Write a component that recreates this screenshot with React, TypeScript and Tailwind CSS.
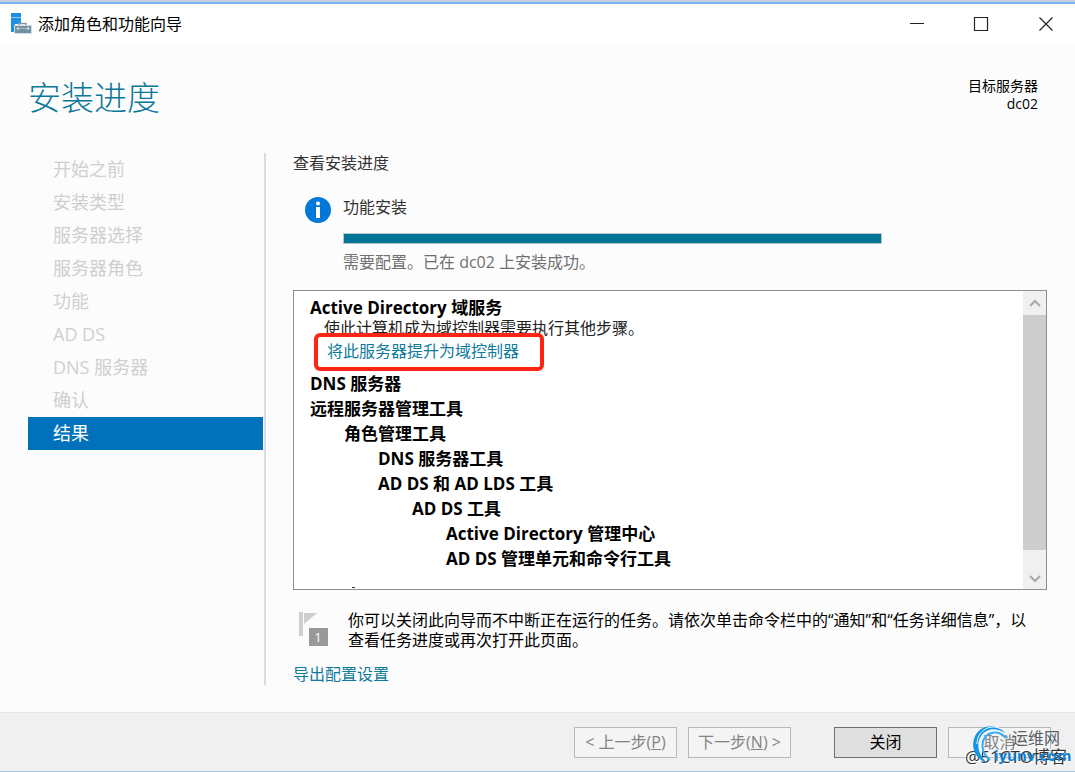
import type { ReactNode } from 'react'

const steps = [
  '开始之前',
  '安装类型',
  '服务器选择',
  '服务器角色',
  '功能',
  'AD DS',
  'DNS 服务器',
  '确认',
  '结果',
]

interface FeatureRow {
  label: string
  indent: string
}

const features: FeatureRow[] = [
  { label: 'DNS 服务器', indent: 'pl-0' },
  { label: '远程服务器管理工具', indent: 'pl-0' },
  { label: '角色管理工具', indent: 'pl-[34px]' },
  { label: 'DNS 服务器工具', indent: 'pl-[68px]' },
  { label: 'AD DS 和 AD LDS 工具', indent: 'pl-[68px]' },
  { label: 'AD DS 工具', indent: 'pl-[102px]' },
  { label: 'Active Directory 管理中心', indent: 'pl-[136px]' },
  { label: 'AD DS 管理单元和命令行工具', indent: 'pl-[136px]' },
]

function TitleBar() {
  return (
    <header className="flex h-10 items-center bg-white pl-[10px]">
      <svg className="h-[22px] w-[22px] shrink-0" viewBox="0 0 22 22">
        <path d="M1 0h10v11H5v8H1z" fill="#1f8fe0" />
        <path d="M1 4.5h10" stroke="#8cc8f2" />
        <path d="M9 12.5v-2h7v2" fill="none" stroke="#8399a8" strokeWidth="1.5" />
        <path d="M4.5 12.5h17v8h-17z" fill="#7391a5" stroke="#d5dee4" />
        <path d="M6 15.5h14" stroke="#a9bcc8" />
        <path d="M8 14v3M18 14v3" stroke="#e8eef2" />
      </svg>
      <h1 className="ml-[6px] text-[16px] leading-6 text-black">添加角色和功能向导</h1>
      <div className="ml-auto flex h-full">
        <button aria-label="最小化" className="flex w-16 items-center justify-center">
          <svg className="h-4 w-4" viewBox="0 0 16 16" fill="none" stroke="#222" strokeWidth="1">
            <path d="M1 7.5h14" />
          </svg>
        </button>
        <button aria-label="最大化" className="flex w-16 items-center justify-center">
          <svg className="h-4 w-4" viewBox="0 0 16 16" fill="none" stroke="#222" strokeWidth="1.2">
            <path d="M1.5 1.5h13v13h-13z" />
          </svg>
        </button>
        <button aria-label="关闭窗口" className="flex w-[62px] items-center justify-center pl-1">
          <svg className="h-4 w-4" viewBox="0 0 16 16" fill="none" stroke="#222" strokeWidth="1.2">
            <path d="M1.5 1.5l13 13M14.5 1.5l-13 13" />
          </svg>
        </button>
      </div>
    </header>
  )
}

function StepList() {
  return (
    <nav className="w-[238px] shrink-0 border-r-2 border-[#dcdcdc] pr-[1px]">
      <ul>
        {steps.map((step, i) => (
          <li
            key={step}
            className={
              i === steps.length - 1
                ? 'h-[33px] bg-[#0072bc] pl-[25px] text-[18px] leading-[33px] text-white'
                : 'h-[33px] pl-[25px] text-[18px] leading-[33px] text-[#cfcfcf]'
            }
          >
            {step}
          </li>
        ))}
      </ul>
    </nav>
  )
}

function ScrollBar() {
  return (
    <div className="flex w-[23px] shrink-0 flex-col bg-[#f0f0f0]">
      <button aria-label="向上滚动" className="flex h-6 items-center justify-center">
        <svg className="h-3 w-3" viewBox="0 0 12 12" fill="none" stroke="#a8a8a8" strokeWidth="2">
          <path d="M1 9l5-5 5 5" />
        </svg>
      </button>
      <div className="grow bg-[#cdcdcd]" />
      <button aria-label="向下滚动" className="flex h-[39px] items-end justify-center pb-1">
        <svg className="h-3 w-3" viewBox="0 0 12 12" fill="none" stroke="#a8a8a8" strokeWidth="2">
          <path d="M1 3l5 5 5-5" />
        </svg>
      </button>
    </div>
  )
}

function ResultBox() {
  return (
    <section className="mt-[18px] flex h-[300px] border border-[#8a8f99] bg-white">
      <div className="flex min-w-0 grow flex-col overflow-hidden pt-1 pl-4 text-[16px] text-black">
        <h3 className="h-[25px] text-[17px] leading-[25px] font-bold">Active Directory 域服务</h3>
        <p className="h-[17px] pl-[14px] leading-[17px] whitespace-nowrap text-[#222]">
          使此计算机成为域控制器需要执行其他步骤。
        </p>
        <div className="flex h-[34px] items-start pt-[2px] pl-[17px]">
          <a href="#promote" className="relative leading-6 text-[#0e7a9c]">
            将此服务器提升为域控制器
            <span className="absolute -top-[6px] -right-[25px] -bottom-[8px] -left-[13px] rounded-md border-4 border-[#ff2414]" />
          </a>
        </div>
        <ul className="text-[17px] font-bold">
          {features.map((f) => (
            <li key={f.label} className={f.indent + ' h-[25px] leading-[25px] whitespace-nowrap'}>
              {f.label}
            </li>
          ))}
        </ul>
        <div className="mt-auto mb-[1px] ml-[42px] h-[1px] w-[3px] shrink-0 bg-[#333]" />
      </div>
      <ScrollBar />
    </section>
  )
}

function WizardButton({ children, disabled }: { children: ReactNode; disabled?: boolean }) {
  return (
    <button
      disabled={disabled}
      className={
        disabled
          ? 'h-[31px] w-[103px] border border-[#b4babd] bg-[#f4f4f4] text-[16px] text-[#838383]'
          : 'h-[31px] w-[103px] border border-[#707070] bg-[#dfdfdf] text-[16px] text-black'
      }
    >
      {children}
    </button>
  )
}

function Watermark() {
  return (
    <div className="pointer-events-none absolute right-1 bottom-0 h-[50px] w-[106px]">
      <span className="absolute bottom-1 left-0 text-[17px] leading-5 whitespace-nowrap text-[#333] [text-shadow:1px_1px_0_#fff,-1px_-1px_0_#fff]">
        @51CTO博客
      </span>
      <svg className="absolute top-[3px] left-1 h-[42px] w-[42px]" viewBox="0 0 42 42" fill="none">
        <path d="M36 9C27-2 9 1 5 15c-3 10 2 20 13 24C9 30 7 20 12 12 17 4 28 3 36 9z" fill="#1296e8" />
        <path d="M37 14C29 5 17 8 14 17c-2 8 1 14 7 19" stroke="#35aef2" strokeWidth="2" />
        <path d="M32 5C21-1 8 7 8 20" stroke="#fff" strokeWidth="1" />
      </svg>
      <span className="absolute top-[7px] left-[47px] text-[16px] leading-5 whitespace-nowrap text-[#555d66]">
        运维网
      </span>
      <span className="absolute bottom-[6px] left-[29px] text-[15px] leading-5 font-bold whitespace-nowrap text-[#1382d4]">
        iyunv.com
      </span>
    </div>
  )
}

export default function App() {
  return (
    <div className="flex min-h-screen flex-col border-t-2 border-b border-t-[#c3cfe2] border-b-[#a9c3da] bg-[#fcfcfc] font-['Open_Sans','Noto_Sans_CJK_SC',sans-serif]">
      <div className="h-[2px] bg-[#7ab6ee]" />
      <TitleBar />

      <div className="flex items-start justify-between pr-[37px] pl-7">
        <h2 className="pt-[29px] text-[33px] leading-[50px] font-light text-[#0b7799]">安装进度</h2>
        <div className="pt-[33px] text-right text-[14px] leading-[18px] text-black">
          <p>目标服务器</p>
          <p>dc02</p>
        </div>
      </div>

      <div className="mt-[30px] flex grow pr-7 pb-[27px] pl-7">
        <StepList />
        <main className="ml-[27px] min-w-0 grow text-[16px] leading-5">
          <h3 className="text-[#333]">查看安装进度</h3>
          <div className="mt-6 flex">
            <svg className="ml-3 h-[26px] w-[26px] shrink-0" viewBox="0 0 26 26">
              <circle cx="13" cy="13" r="13" fill="#0078d7" />
              <circle cx="13" cy="6.5" r="2" fill="#fff" />
              <path d="M11 10h4v11h-4z" fill="#fff" />
            </svg>
            <div className="ml-3 grow">
              <p className="text-[#333]">功能安装</p>
              <div
                role="progressbar"
                aria-valuenow={100}
                className="mt-4 mr-[165px] h-[11px] border border-[#bcc6ca] bg-[#007495]"
              />
              <p className="mt-2 text-[#707070]">需要配置。已在 dc02 上安装成功。</p>
            </div>
          </div>

          <ResultBox />

          <div className="mt-5 flex">
            <svg className="ml-[6px] h-9 w-[30px] shrink-0" viewBox="0 0 30 36">
              <path d="M0 2h4v24H0z" fill="#cfcfcf" />
              <path d="M5 3h13L5 14z" fill="#cfcfcf" />
              <path d="M10 18h19v18H10z" fill="#999" />
              <text x="19" y="32" textAnchor="middle" fontSize="13" fill="#fff">1</text>
            </svg>
            <p className="ml-[19px] pr-2 text-black">
              你可以关闭此向导而不中断正在运行的任务。请依次单击命令栏中的“通知”和“任务详细信息”，以查看任务进度或再次打开此页面。
            </p>
          </div>
          <a href="#export" className="mt-[14px] inline-block text-[#0e7a9c]">导出配置设置</a>
        </main>
      </div>

      <footer className="relative flex h-[59px] items-center justify-end gap-[11px] border-t border-[#e4e4e4] bg-[#f0f0f0] pr-6">
        <WizardButton disabled>&lt; 上一步(<u>P</u>)</WizardButton>
        <WizardButton disabled>下一步(<u>N</u>) &gt;</WizardButton>
        <div className="ml-8 flex gap-[11px]">
          <WizardButton>关闭</WizardButton>
          <WizardButton disabled>取消</WizardButton>
        </div>
        <Watermark />
      </footer>
    </div>
  )
}
